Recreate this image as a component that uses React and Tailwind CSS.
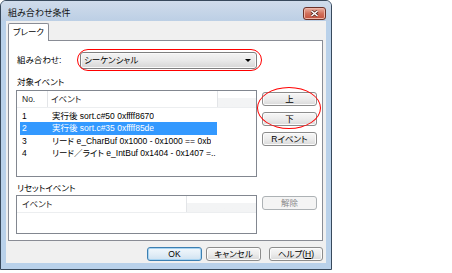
const btn =
  "flex items-center justify-center h-[14px] rounded-[3px] border border-[#8c8c8c] bg-linear-to-b from-[#f7f7f7] via-[#ececec] to-[#d9d9d9] shadow-[inset_0_0_0_1px_#fbfbfb] text-[8.5px] leading-none text-black";

const events = [
  { no: "1", text: "実行後 sort.c#50 0xffff8670" },
  { no: "2", text: "実行後 sort.c#35 0xffff85de", selected: true },
  { no: "3", text: "リード e_CharBuf 0x1000 - 0x1000 == 0xb" },
  { no: "4", text: "リード／ライト e_IntBuf 0x1404 - 0x1407 =.." },
];

const App = () => {
  return (
    <div className="relative w-[452px] h-[273px] bg-white overflow-hidden font-['Liberation_Sans','Noto_Sans_CJK_JP',sans-serif] [font-feature-settings:'palt'] text-black">
      {/* window */}
      <div className="flex flex-col w-[332px] h-[270px] border border-[#38495c] rounded-t-[6px] bg-[#b9d1ea]">
        {/* title bar */}
        <div className="flex h-[20px] rounded-t-[5px] bg-linear-to-b from-[#d0dceb] to-[#bccfe5]">
          <span className="pl-[7px] pt-[8px] text-[9px] leading-none text-[#111]">組み合わせ条件</span>
          <div className="ml-auto mr-[5px] mt-[6px] flex items-center justify-center w-[23px] h-[13px] rounded-[3px] border border-[#6b3128] bg-linear-to-b from-[#e9b0a2] via-[#d2705c] to-[#c4513d] shadow-[inset_0_0_0_1px_#eeb6a8]">
            <svg width="9" height="7" viewBox="0 0 9 7">
              <path d="M1.5 1 L7.5 6 M7.5 1 L1.5 6" stroke="#5a2a22" strokeWidth="3" />
              <path d="M1.5 1 L7.5 6 M7.5 1 L1.5 6" stroke="#fff" strokeWidth="1.6" />
            </svg>
          </div>
        </div>

        {/* client area */}
        <div className="flex flex-col mx-[5px] h-[242px] bg-[#f0f0f0]">
          {/* tab */}
          <div className="relative z-10 ml-[2px] mt-[2px] flex items-center justify-center w-[41px] h-[18px] border border-b-0 border-[#898c95] rounded-t-[2px] bg-white text-[8.5px] leading-none">
            ブレーク
          </div>

          {/* tab panel */}
          <div className="flex flex-col ml-[2px] mr-[3px] -mt-[1px] h-[201px] border border-[#898c95] bg-white pl-[7px] pt-[11px]">
            {/* combination */}
            <div className="flex items-center h-[17px]">
              <span className="w-[64px] pl-[1px] text-[8.5px] leading-none">組み合わせ:</span>
              <div className="flex items-center w-[177px] h-[17px] rounded-[3px] border border-[#7f7f7f] bg-linear-to-b from-[#f4f4f4] via-[#e9e9e9] to-[#d6d6d6] shadow-[inset_0_0_0_1px_#fafafa] pl-[3px] pr-[3px]">
                <span className="text-[8.5px] leading-none">シーケンシャル</span>
                <svg className="ml-auto mr-[2px]" width="6" height="3" viewBox="0 0 6 3">
                  <path d="M0 0 H6 L3 3 Z" fill="#000" />
                </svg>
              </div>
            </div>

            {/* target events */}
            <div className="mt-[8px] h-[10px] pl-[1px] text-[8.5px] leading-[10px]">対象イベント</div>
            <div className="flex mt-[3px]">
              <div className="flex flex-col w-[241px] h-[87px] border border-[#828790] bg-white">
                <div className="flex h-[17px] border-b border-[#eceef0] text-[8.5px] leading-none text-[#1e1e1e]">
                  <div className="flex items-center w-[31px] border-r border-[#e3e5e8] pl-[5px]">No.</div>
                  <div className="flex items-center w-[170px] border-r border-[#e3e5e8] pl-[3px]">イベント</div>
                  <div className="flex-1 bg-linear-to-b from-white from-45% to-[#f3f4f5] to-45%" />
                </div>
                <div className="flex flex-col pt-[1.5px]">
                  {events.map((ev) => (
                    <div
                      key={ev.no}
                      className={
                        ev.selected
                          ? "flex items-center ml-[3px] w-[197px] h-[12.5px] bg-[#3399ff] text-white text-[8.5px] leading-[12px]"
                          : "flex items-center ml-[3px] w-[197px] h-[12.5px] text-[8.5px] leading-[12px]"
                      }
                    >
                      <span className="w-[28px] pl-[2px]">{ev.no}</span>
                      <span className="pl-[4px] whitespace-nowrap overflow-hidden">{ev.text}</span>
                    </div>
                  ))}
                </div>
              </div>
              <div className="flex flex-col gap-[6px] ml-[5px] pt-[2px] w-[55px]">
                <div className={btn}>上</div>
                <div className={btn}>下</div>
                <div className={btn}>Rイベント</div>
              </div>
            </div>

            {/* reset events */}
            <div className="mt-[6px] h-[10px] pl-[1px] text-[8.5px] leading-[10px]">リセットイベント</div>
            <div className="flex mt-[2px]">
              <div className="flex flex-col w-[241px] h-[39px] border border-[#828790] bg-white">
                <div className="flex h-[17px] border-b border-[#eceef0] text-[8.5px] leading-none text-[#1e1e1e]">
                  <div className="flex items-center w-[170px] border-r border-[#e3e5e8] pl-[5px]">イベント</div>
                  <div className="flex-1 bg-linear-to-b from-white from-45% to-[#f3f4f5] to-45%" />
                </div>
              </div>
              <div className="flex items-center justify-center ml-[5px] mt-[1px] w-[55px] h-[14px] rounded-[3px] border border-[#adb2b5] bg-[#f4f4f4] text-[8.5px] leading-none text-[#8a8a8a]">
                解除
              </div>
            </div>
          </div>

          {/* dialog buttons */}
          <div className="flex justify-end mt-[6px] mr-[3px]">
            <div className="flex items-center justify-center w-[55px] h-[14px] rounded-[3px] border border-[#3c7fb1] bg-linear-to-b from-[#f2f8fc] via-[#e3eef7] to-[#cfe2f1] shadow-[inset_0_0_0_1px_#a8d4f2] text-[8.5px] leading-none">
              OK
            </div>
            <div className={btn + " w-[55px] ml-[4px]"}>キャンセル</div>
            <div className={btn + " w-[54px] ml-[8px]"}>
              ヘルプ(<span className="underline">H</span>)
            </div>
          </div>
        </div>
      </div>

      {/* red highlight marks */}
      <div className="pointer-events-none absolute left-[77px] top-[49px] w-[185px] h-[22px] rounded-full border border-[#ff0000]" />
      <div className="pointer-events-none absolute left-[257px] top-[87px] w-[64px] h-[42px] rounded-[50%] border border-[#ff0000]" />
    </div>
  );
};

export default App;
